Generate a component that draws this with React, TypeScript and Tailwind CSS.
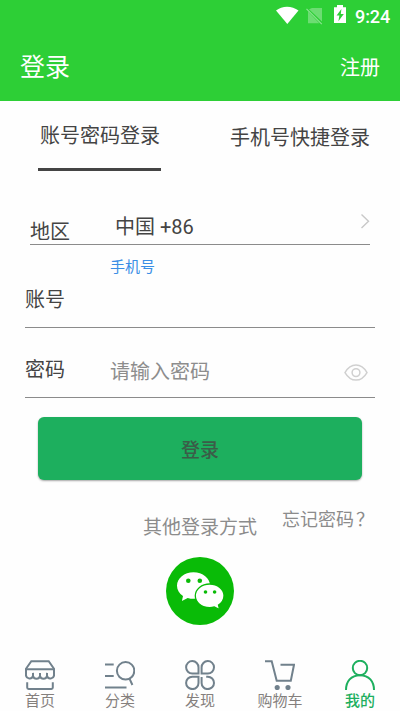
import React from "react";

function StatusBar() {
  return (
    <div className="flex h-8 items-center justify-end text-white">
      <svg width="85" height="32" viewBox="0 0 85 32" fill="none">
        <path d="M6 10.6C12 5.5 22 5.5 28.5 10.6L17.3 24Z" fill="white" />
        <path d="M42 8h10v13.5L39 9.2ZM38 11.5 49.3 23.3H38Z" fill="white" fillOpacity=".3" />
        <path d="M36.5 8.8 51.8 24.2" stroke="white" strokeOpacity=".45" strokeWidth="1.2" />
        <path d="M64 7.2h3V5h6v2.2h3V23H64Z" fill="white" />
        <path d="M71.4 8.9 66.6 15.4h2.8l-1 5.8 5.4-7.2h-3Z" fill="#2dcf36" />
      </svg>
      <span className="w-[45px] pt-px text-[18px] font-medium leading-[32px] tracking-[-0.1px]">9:24</span>
    </div>
  );
}

function WechatLogo() {
  return (
    <svg width="68" height="68" viewBox="0 0 68 68">
      <circle cx="34" cy="34" r="34" fill="#09bb07" />
      <path d="M27.5 15.2C18.3 15.2 11 21.2 11 28.7c0 4.1 2.3 7.8 6 10.3L15.9 44l5.8-3.1c1.9.6 3.8.9 5.8.9 9.2 0 16.6-6 16.6-13.2s-7.4-13.4-16.6-13.4Z" fill="white" />
      <path d="M43.7 27c-8.1 0-14.4 5.3-14.4 11.8s6.3 11.8 14.4 11.8c1.6 0 3.1-.2 4.6-.6l5.3 2.6-1.1-4.5c3.3-2.2 5.5-5.4 5.5-9.3C58 32.3 51.6 27 43.7 27Z" fill="white" stroke="#09bb07" strokeWidth="1.3" />
      <g fill="#09bb07">
        <circle cx="22.3" cy="23.8" r="2.3" />
        <circle cx="33.8" cy="23.8" r="2.3" />
        <circle cx="39.5" cy="35" r="1.8" />
        <circle cx="48.6" cy="35" r="1.8" />
      </g>
    </svg>
  );
}

const icons = {
  home: (
    <>
      <path d="M6.3 1.2h17.4L29 8.7v5.6a3.6 3.6 0 0 1-7 1.6 3.6 3.6 0 0 1-7 0 3.6 3.6 0 0 1-7 0 3.6 3.6 0 0 1-7-1.6V8.7Z" />
      <path d="M1 9.3h28M8 13v3.5M15 13v3.5M22 13v3.5M2.2 22.3v5.2q0 1.4 1.4 1.4h22.8q1.4 0 1.4-1.4v-5.2" />
    </>
  ),
  category: (
    <>
      <circle cx="20.6" cy="10.8" r="8.7" />
      <path d="m24.6 18.8 2.8 6.2M0 4.6h8.7M0 16h8.7M0 27.4h21.5" />
    </>
  ),
  discover: (
    <>
      <path d="M13.5 13.5V7.4A6.2 6.2 0 1 0 7.3 13.5Z" />
      <path d="M16.6 13.5V7.4a6.2 6.2 0 1 1 6.2 6.1Z" />
      <path d="M13.5 16.7v6.1a6.2 6.2 0 1 1-6.2-6.1Z" />
      <path d="M16.6 16.9v5.9a6.2 6.2 0 1 0 6.2-6.1h-1.6" />
    </>
  ),
  cart: (
    <>
      <path d="M0 1.2h6.7l5 19.6h14.1l3.2-16H15.5" />
      <circle cx="12.2" cy="27.5" r="1.6" fill="currentColor" />
      <circle cx="23" cy="27.5" r="1.6" fill="currentColor" />
    </>
  ),
  mine: (
    <>
      <circle cx="15" cy="8" r="7.2" />
      <path d="M1 30c0-8.5 5-14.8 14-14.8S29 21.5 29 30" />
    </>
  ),
};

const tabs: { label: string; icon: keyof typeof icons; active?: boolean }[] = [
  { label: "首页", icon: "home" },
  { label: "分类", icon: "category" },
  { label: "发现", icon: "discover" },
  { label: "购物车", icon: "cart" },
  { label: "我的", icon: "mine", active: true },
];

export default function App() {
  return (
    <div className="flex h-[711px] w-[400px] flex-col overflow-hidden bg-[#fefefe] font-[Roboto,'Noto_Sans_CJK_SC',sans-serif] text-[20px] leading-[24px] text-[#444]">
      <header className="h-[101px] shrink-0 bg-[#2dcf36] text-white">
        <StatusBar />
        <div className="flex h-[71px] items-center justify-between pl-5 pr-5">
          <h1 className="text-[25px] leading-[30px]">登录</h1>
          <span>注册</span>
        </div>
      </header>

      <div className="flex h-[70px] shrink-0 items-start justify-between pl-[38px] pr-[30px]">
        <div className="h-[70px] w-[123px] border-b-[3px] border-[#444] pl-0.5 pt-[23px]">账号密码登录</div>
        <div className="pt-[25px]">手机号快捷登录</div>
      </div>

      <div className="mx-[30px] mt-[34px] flex h-10 shrink-0 items-start border-b border-[#8b8b8b]">
        <span className="w-[85px] pt-[15px]">地区</span>
        <span className="flex-1 pt-[10px]">中国 +86</span>
        <svg className="mt-2" width="10" height="16" viewBox="0 0 10 16" fill="none" stroke="#c8c8c8" strokeWidth="1.4">
          <path d="m1.5 1.5 7 6.7-7 6.7" />
        </svg>
      </div>

      <div className="mx-[25px] flex h-[83px] shrink-0 items-start border-b border-[#8b8b8b]">
        <span className="w-[85px] pt-[43px]">账号</span>
        <span className="pt-[10px] text-[15px] text-[#3b8ee5]">手机号</span>
      </div>

      <div className="mx-[25px] flex h-[70px] shrink-0 items-start border-b border-[#8b8b8b]">
        <span className="w-[85px] pt-[30px]">密码</span>
        <span className="flex-1 pt-[32px] text-[#8d8d8d]">请输入密码</span>
        <svg className="mr-[7px] mt-[35px]" width="24" height="19" viewBox="0 0 24 19" fill="none" stroke="#d0d0d0" strokeWidth="1.5">
          <path d="M1 9.6C3.8 4.8 7.8 2.1 12 2.1S20.2 4.8 23 9.6c-2.8 4.8-6.8 7.5-11 7.5S3.8 14.4 1 9.6Z" />
          <circle cx="12" cy="9.6" r="3.9" />
        </svg>
      </div>

      <button className="mx-[38px] mt-[19px] h-[63px] shrink-0 rounded-[6px] bg-[#1daf5e] pt-[4px] text-[19px] font-medium text-[#3b5c48] shadow-[0_1px_2px_rgba(0,0,0,0.35)]">
        登录
      </button>

      <div className="flex h-[77px] shrink-0 items-start pl-[143px]">
        <span className="w-[139px] pt-[36px] text-[19px] text-[#8c8c8c]">其他登录方式</span>
        <span className="flex pt-[28px] text-[18px] text-[#8c8c8c]">
          忘记密码<span className="pl-0.5">？</span>
        </span>
      </div>
      <div className="flex shrink-0 justify-center">
        <WechatLogo />
      </div>

      <nav className="mt-[34px] grid shrink-0 grid-cols-5">
        {tabs.map((t) => (
          <div key={t.label} className={t.active ? "flex flex-col items-center text-[#1daf5e]" : "flex flex-col items-center text-[#71818c]"}>
            <svg className="mt-px" width="30" height="30" viewBox="0 0 30 30" fill="none" stroke="currentColor" strokeWidth="2">
              {icons[t.icon]}
            </svg>
            <span className={t.active ? "text-[15px] font-medium leading-[22px]" : "text-[15px] leading-[22px] text-[#85807d]"}>{t.label}</span>
          </div>
        ))}
      </nav>
    </div>
  );
}
